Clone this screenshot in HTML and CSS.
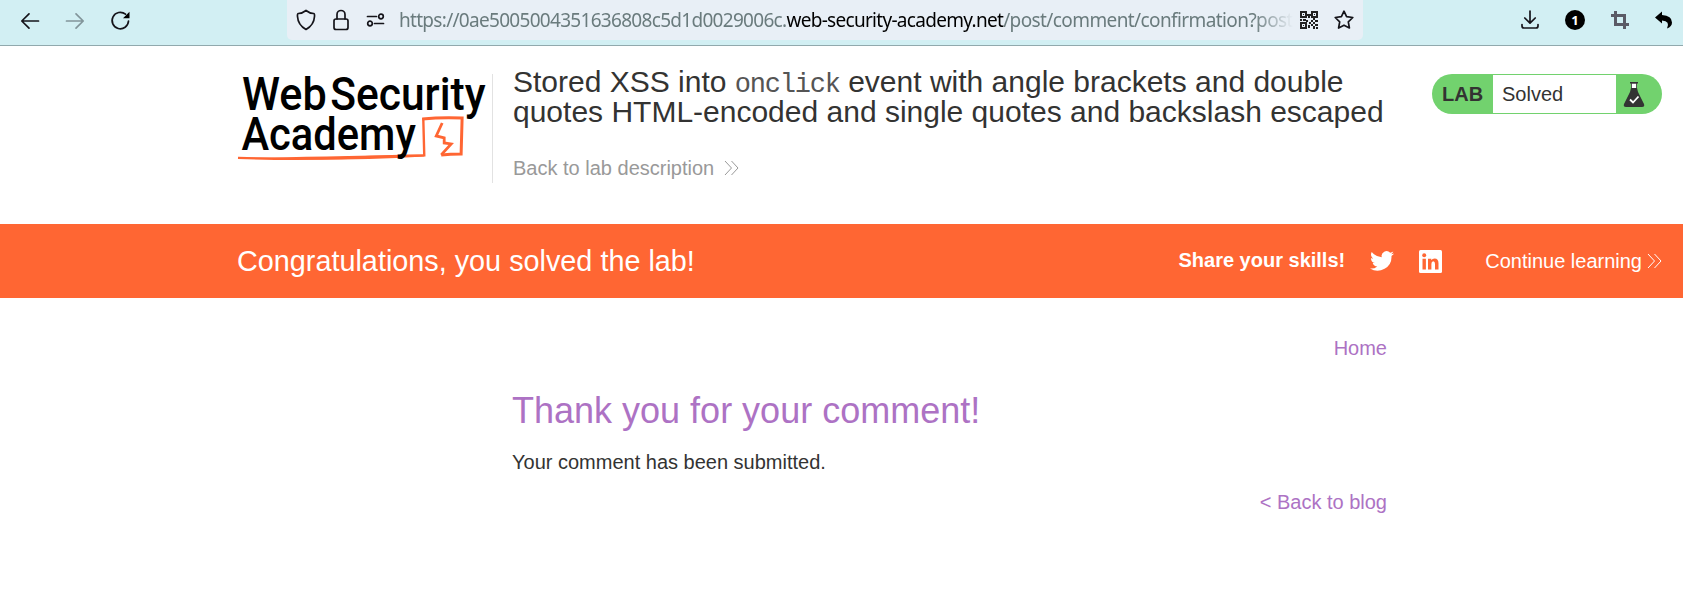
FILE: index.html
```html
<!DOCTYPE html>
<html lang="en">
<head>
<meta charset="utf-8">
<title>Stored XSS into onclick event</title>
<link rel="stylesheet" href="styles.css">
</head>
<body>
<nav class="browser-bar">
  <div class="nav-buttons">
    <svg width="18" height="18" viewBox="0 0 18 18" class="line-icon"><path d="M17.500 9H1M8 1.800L.8 9 8 16.200"/></svg>
    <svg width="18" height="18" viewBox="0 0 18 18" class="line-icon muted"><path d="M.5 9H17M10 1.800L17.200 9 10 16.200"/></svg>
    <svg width="20" height="20" viewBox="0 0 20 20" class="line-icon"><path d="M14.500 3.200A8.200 8.200 0 1 0 17.500 10"/><path d="M18.500 .8v6.500H12z" fill="#000" stroke="none"/></svg>
  </div>
  <div class="address">
    <svg width="20" height="22" viewBox="0 0 20 22" class="line-icon"><path d="M10 1.500Q13.500 4.300 17.600 4.500Q18.800 4.700 18.500 7.500Q18 16 10 20.500Q2 16 1.500 7.500Q1.200 4.700 2.400 4.500Q6.500 4.300 10 1.500z"/></svg>
    <svg width="16" height="22" viewBox="0 0 16 22" class="line-icon"><rect x="1" y="10" width="14" height="10.500" rx="2"/><path d="M4 10V5.500a4 4 0 0 1 8 0V10"/></svg>
    <svg width="19" height="14" viewBox="0 0 19 14" class="line-icon"><path d="M1.500 3.500h9M8.500 10.500h9"/><circle cx="15" cy="3.500" r="2.300"/><circle cx="4" cy="10.500" r="2.300"/></svg>
    <div class="url"><span class="url-sub">https://0ae5005004351636808c5d1d0029006c.</span><span class="url-domain">web-security-academy.net</span><span class="url-path">/post/comment/confirmation?post</span></div>
    <svg width="18" height="18" viewBox="0 0 18 18" class="qr"><path fill="none" stroke="#222" stroke-width="2" d="M1 1h5v5H1zM12 1h5v5h-5zM1 12h5v5H1z"/><path fill="#222" d="M3 3h1v1H3zM14 3h1v1h-1zM3 14h1v1H3zM7 3h4v2H7zM8 5h2v2H8zM0 8h2v2H0zM3 8h3v2H3zM6 9h2v2H6zM9 11h2v2H9zM11 9h2v2h-2zM13 7h2v2h-2zM15 9h3v2h-3zM13 11h2v2h-2zM11 13h2v2h-2zM8 14h2v3H8zM15 13h3v2h-3zM13 15h2v3h-2zM16 16h2v2h-2z"/></svg>
    <svg width="20" height="20" viewBox="0 0 20 20" class="line-icon star"><path d="M10 1.200L12.600 6.600 18.800 7.500 14.300 11.800 15.400 18 10 15.200 4.600 18 5.700 11.800 1.200 7.500 7.400 6.600z"/></svg>
  </div>
  <div class="tools">
    <svg width="18" height="20" viewBox="0 0 18 20" class="line-icon"><path d="M9 1v12M3.800 8L9 13.200 14.200 8M1 14.500v1.500q0 2 2 2h12q2 0 2-2v-1.500"/></svg>
    <span class="count">1</span>
    <svg width="18" height="18" viewBox="0 0 18 18"><path d="M4.500 0v13.500H18M0 4.500h13.500V18" fill="none" stroke="#5b5b66" stroke-width="3"/></svg>
    <svg width="18" height="18" viewBox="0 0 18 18"><path d="M0 6.500L7 .5V4Q17 4.500 17 11.500Q17 15.500 12 17.500Q15.500 10 7 9.500V12.500z"/></svg>
  </div>
</nav>

<header class="lab-header">
  <svg class="logo" width="255" height="109" viewBox="0 0 255 109">
    <g class="logo-text">
      <text x="4" y="35.500" textLength="85" lengthAdjust="spacingAndGlyphs">Web</text>
      <text x="92.500" y="35.500" textLength="156" lengthAdjust="spacingAndGlyphs">Security</text>
    </g>
    <g fill="none" stroke="#ff6633">
      <path d="M0 84Q60 86 110 84T187 81.500L186 44" stroke-width="2.400"/>
      <path d="M185 45Q205 43 225 44L224 80Q213 80 204 81" stroke-width="3"/>
      <path d="M205 49L199 62 207 64V69L214 70 204 81" stroke-width="2.800"/>
    </g>
    <path fill="#ff6633" d="M0 84Q60 83 187 80.500V82.500Q90 88 0 84z"/>
    <g class="logo-text"><text x="3.500" y="76.500" textLength="175" lengthAdjust="spacingAndGlyphs">Academy</text></g>
  </svg>
  <div class="title">
    <h1>Stored XSS into <code>onclick</code> event with angle brackets and double<br>quotes HTML-encoded and single quotes and backslash escaped</h1>
    <a class="back"><span>Back to lab description</span><svg width="15" height="16" viewBox="0 0 15 16"><path d="M1 1l6.500 7L1 15M7.500 1L14 8l-6.500 7" fill="none" stroke="currentColor"/></svg></a>
  </div>
  <div class="status">
    <b>LAB</b><span>Solved</span>
    <svg width="20" height="25" viewBox="0 0 20 25"><path fill="#fff" stroke="#555" d="M7.500 1h5v6h-5z"/><path fill="#333" d="M6 0h8v1.500H6zM7 6h6l1 4 6 12q1 3-2 3H2q-3 0-2-3l6-12z"/><path d="M6 17.500l3 3 5.500-6" fill="none" stroke="#fff" stroke-width="1.800"/></svg>
  </div>
</header>

<section class="banner">
  <h2>Congratulations, you solved the lab!</h2>
  <b>Share your skills!</b>
  <svg class="twitter" width="24" height="20" viewBox="0 0 24 20"><path fill="#fff" d="M24 2.400a10 10 0 0 1-2.800.8A5 5 0 0 0 23.300.500a10 10 0 0 1-3.100 1.200A4.900 4.900 0 0 0 11.800 6.200 14 14 0 0 1 1.700 1a4.900 4.900 0 0 0 1.500 6.600 4.900 4.900 0 0 1-2.200-.6 4.900 4.900 0 0 0 3.900 4.900 5 5 0 0 1-2.200.1 4.900 4.900 0 0 0 4.600 3.400A9.900 9.900 0 0 1 0 17.500a14 14 0 0 0 21.500-12.500A10 10 0 0 0 24 2.400z"/></svg>
  <svg class="linkedin" width="23" height="23" viewBox="0 0 23 23"><rect width="23" height="23" rx="1.500" fill="#fff"/><path fill="#ff6633" d="M3.500 8.800h3.400v10.700H3.500zM9 8.800h3.300v1.500Q13.300 8.500 15.600 8.500Q19.500 8.500 19.500 13.200V19.500H16V14Q16 11.300 14.300 11.300Q12.400 11.300 12.400 14V19.500H9z"/><circle cx="5.200" cy="5.300" r="2" fill="#ff6633"/></svg>
  <a class="continue"><span>Continue learning</span><svg width="15" height="16" viewBox="0 0 15 16"><path d="M1 1l6.500 7L1 15M7.500 1L14 8l-6.500 7" fill="none" stroke="currentColor"/></svg></a>
</section>

<main class="content">
  <a class="home">Home</a>
  <h1>Thank you for your comment!</h1>
  <p>Your comment has been submitted.</p>
  <a class="blog">&lt; Back to blog</a>
</main>
</body>
</html>
```
FILE: styles.css
```css
* { box-sizing: border-box; }
body { margin: 0; background: #fff; color: #333332; font: 20px/24px "Liberation Sans", Arial, sans-serif; overflow: hidden; }
h1, h2, p { margin: 0; font-weight: 400; }
svg { display: block; flex: none; overflow: visible; }
a, span { white-space: nowrap; }

.browser-bar { display: flex; height: 46px; background: #d2eff3; border-bottom: 1px solid #91a9ad; }
.nav-buttons { display: flex; align-items: center; gap: 27px; width: 287px; height: 41px; padding-left: 21px; }
.line-icon { fill: none; stroke: #15141a; stroke-width: 1.700; stroke-linecap: round; stroke-linejoin: round; }
.muted { stroke: #82959a; }
.address { display: flex; align-items: center; width: 1076px; height: 40px; padding-left: 9px; gap: 17px; background: #e8eff6; border-radius: 0 0 5px 5px; }
.url { width: 894px; flex: none; margin: 0 -10px 0 -3px; overflow: hidden; color: #6a7b7d; font: 19px/30px "Noto Sans", sans-serif; letter-spacing: -.7px; white-space: nowrap; -webkit-mask-image: linear-gradient(90deg, #000 855px, transparent 894px); mask-image: linear-gradient(90deg, #000 855px, transparent 894px); }
.url-domain { color: #000; }
.url-path { letter-spacing: -.6px; }
.star { margin-left: -1px; }
.tools { display: flex; align-items: center; gap: 26px; height: 40px; margin-left: 158px; }
.count { width: 20px; height: 20px; border-radius: 50%; background: #000; color: #fff; font: bold 13px/20px "Open Sans", sans-serif; text-align: center; }

.lab-header { display: flex; height: 178px; padding: 28px 21px 0 238px; }
.logo { border-right: 1px solid #e2e2e2; }
.logo-text { font: 500 47px Roboto, sans-serif; fill: #000; }
.title { width: 890px; margin: -7px 0 0 20px; }
.title h1 { font-size: 30px; line-height: 30px; white-space: nowrap; }
.title code { color: #555; font: 27px/20px "Liberation Mono", monospace; letter-spacing: -1.200px; }
.back { display: flex; align-items: center; gap: 10px; margin-top: 29px; color: #999; }
.status { display: flex; align-items: center; width: 230px; height: 40px; margin-left: auto; border-radius: 20px; background: #72d26e; }
.status b { width: 61px; padding-left: 10px; }
.status span { width: 123px; height: 38px; padding-left: 9px; background: #fff; line-height: 39px; }
.status svg { margin-left: 8px; }

.banner { display: flex; align-items: center; height: 74px; padding: 0 21px 0 237px; background: #ff6633; color: #fff; }
.banner h2 { font-size: 28.800px; }
.banner b { margin-left: auto; margin-top: -2px; }
.twitter { margin-left: 25px; }
.linkedin { margin-left: 25px; }
.continue { display: flex; align-items: center; gap: 5px; margin-left: 43px; }

.content { display: flex; flex-direction: column; width: 875px; margin-left: 512px; padding-top: 38px; }
.content a { align-self: flex-end; color: #ad72c4; }
.content h1 { margin-top: 30px; color: #ad72c4; font-size: 36px; line-height: 42px; }
.content p { margin-top: 18px; }
.content .blog { margin-top: 16px; }
```
